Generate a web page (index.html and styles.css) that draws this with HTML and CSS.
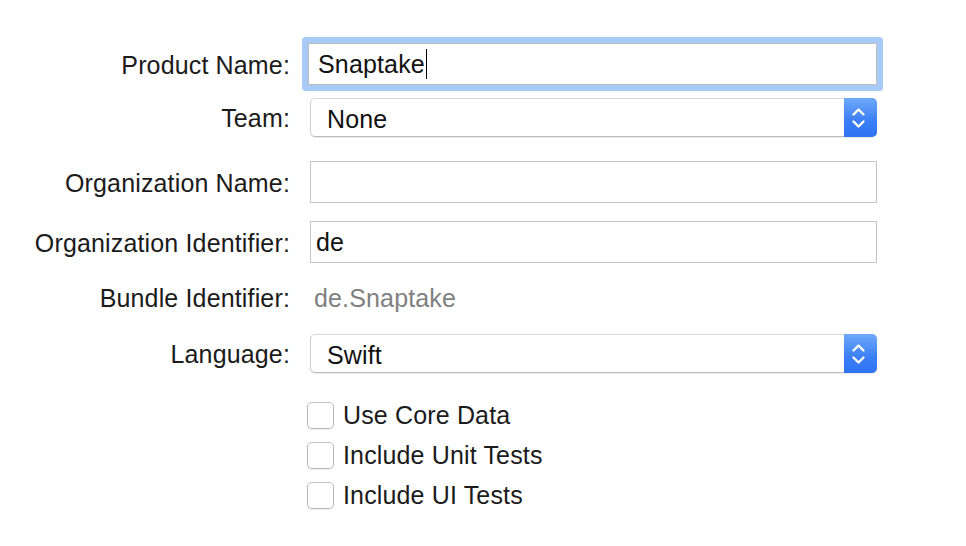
FILE: index.html
```html
<!DOCTYPE html>
<html>
<head>
<meta charset="utf-8">
<link rel="stylesheet" href="styles.css">
</head>
<body>
<div class="form">
  <div class="row r-product">
    <div class="lbl">Product Name:</div>
    <div class="field focused"><span class="val">Snaptake</span><span class="caret"></span></div>
  </div>
  <div class="row r-team">
    <div class="lbl">Team:</div>
    <div class="popup"><span class="ptext">None</span><span class="stepper"><svg width="32" height="39" viewBox="0 0 32 39"><path d="M9.5 16.5 L14.5 11.5 L19.5 16.5" fill="none" stroke="#fff" stroke-width="2.4" stroke-linecap="round" stroke-linejoin="round"/><path d="M9.5 23.5 L14.5 28.5 L19.5 23.5" fill="none" stroke="#fff" stroke-width="2.4" stroke-linecap="round" stroke-linejoin="round"/></svg></span></div>
  </div>
  <div class="row r-orgname">
    <div class="lbl">Organization Name:</div>
    <div class="field"></div>
  </div>
  <div class="row r-orgid">
    <div class="lbl">Organization Identifier:</div>
    <div class="field"><span class="val">de</span></div>
  </div>
  <div class="row r-bundle">
    <div class="lbl">Bundle Identifier:</div>
    <div class="static">de.Snaptake</div>
  </div>
  <div class="row r-lang">
    <div class="lbl">Language:</div>
    <div class="popup"><span class="ptext">Swift</span><span class="stepper"><svg width="32" height="39" viewBox="0 0 32 39"><path d="M9.5 16.5 L14.5 11.5 L19.5 16.5" fill="none" stroke="#fff" stroke-width="2.4" stroke-linecap="round" stroke-linejoin="round"/><path d="M9.5 23.5 L14.5 28.5 L19.5 23.5" fill="none" stroke="#fff" stroke-width="2.4" stroke-linecap="round" stroke-linejoin="round"/></svg></span></div>
  </div>
  <div class="row r-check1">
    <div class="lbl"></div>
    <label class="check"><span class="box"></span><span>Use Core Data</span></label>
  </div>
  <div class="row r-check">
    <div class="lbl"></div>
    <label class="check"><span class="box"></span><span>Include Unit Tests</span></label>
  </div>
  <div class="row r-check">
    <div class="lbl"></div>
    <label class="check"><span class="box"></span><span>Include UI Tests</span></label>
  </div>
</div>
</body>
</html>
```

FILE: styles.css
```css
html, body {
  margin: 0;
  padding: 0;
  background: #ffffff;
}
body {
  font-family: "Liberation Sans", Arial, sans-serif;
  font-size: 25px;
  letter-spacing: 0.15px;
  color: #1b1b1b;
  width: 966px;
  height: 546px;
  overflow: hidden;
}
.form {
  display: flex;
  flex-direction: column;
  padding-top: 43px;
}
.row {
  display: grid;
  grid-template-columns: 290px 567px;
  column-gap: 20px;
  align-items: center;
}
.lbl {
  text-align: right;
  white-space: nowrap;
  padding-top: 2px;
}
.r-team { margin-top: 13px; }
.r-orgname { margin-top: 24px; }
.r-orgid { margin-top: 18px; }
.r-bundle { margin-top: 17px; height: 34px; }
.r-lang { margin-top: 20px; }
.r-check1 { margin-top: 29px; }
.r-check { margin-top: 13px; }

.field {
  box-sizing: border-box;
  height: 42px;
  border: 1px solid #c4c4c4;
  background: #fff;
  display: flex;
  align-items: center;
  padding: 1px 5px 0;
}
.field.focused {
  margin-left: -2px;
  width: 569px;
  padding-top: 0;
  padding-left: 9px;
  border-color: #bdbdbd;
  border-radius: 1px;
  box-shadow: 0 0 0 6px #a9c9f6;
}
.val {
  color: #111;
}
.caret {
  display: inline-block;
  width: 1.5px;
  height: 30px;
  background: #000;
  margin-left: 1px;
}
.static {
  padding-left: 4px;
  color: #808080;
  padding-top: 2px;
}
.popup {
  box-sizing: border-box;
  height: 39px;
  border: 1px solid #cdcdcd;
  border-top-color: #d8d8d8;
  border-bottom-color: #bcbcbc;
  border-radius: 5px;
  background: #fff;
  box-shadow: 0 1px 1px rgba(0, 0, 0, 0.08);
  display: flex;
  align-items: stretch;
}
.ptext {
  flex: 1;
  display: flex;
  align-items: center;
  padding-left: 16px;
  padding-top: 3px;
  color: #111;
}
.stepper {
  width: 33px;
  margin: -1px -1px -1px 0;
  border-radius: 0 5px 5px 0;
  background: linear-gradient(#6ea9f9, #3a7ef6 60%, #2f73f4);
  display: flex;
}
.stepper svg {
  display: block;
}
.check {
  display: flex;
  align-items: center;
  gap: 9px;
  margin-left: -3px;
  height: 27px;
}
.box {
  box-sizing: border-box;
  width: 27px;
  height: 27px;
  border: 1px solid #b8b8b8;
  border-top-color: #c4c4c4;
  border-radius: 5px;
  background: #fff;
  box-shadow: 0 1px 1px rgba(0, 0, 0, 0.06);
  flex: none;
}
```
